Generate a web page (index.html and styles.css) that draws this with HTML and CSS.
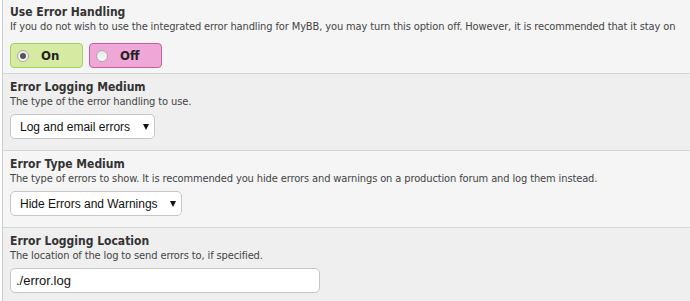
FILE: index.html
```html
<!DOCTYPE html>
<html lang="en">
<head>
  <meta charset="UTF-8" />
  <title>Error Handling Settings</title>
  <link rel="stylesheet" href="styles.css">
</head>
<body>
  <div class="settings">
    <!-- Use Error Handling -->
    <div class="setting first">
      <div class="title">Use Error Handling</div>
      <div class="desc">If you do not wish to use the integrated error handling for MyBB, you may turn this option off. However, it is recommended that it stay on</div>
      <div class="yesno">
        <label class="choice on"><span class="radio checked"></span>On</label>
        <label class="choice off"><span class="radio"></span>Off</label>
      </div>
    </div>

    <!-- Error Logging Medium -->
    <div class="setting alt">
      <div class="title">Error Logging Medium</div>
      <div class="desc">The type of the error handling to use.</div>
      <div class="select-wrap">
        <select class="select">
          <option>Log and email errors</option>
        </select>
      </div>
    </div>

    <!-- Error Type Medium -->
    <div class="setting">
      <div class="title">Error Type Medium</div>
      <div class="desc">The type of errors to show. It is recommended you hide errors and warnings on a production forum and log them instead.</div>
      <div class="select-wrap">
        <select class="select">
          <option>Hide Errors and Warnings</option>
        </select>
      </div>
    </div>

    <!-- Error Logging Location -->
    <div class="setting alt">
      <div class="title">Error Logging Location</div>
      <div class="desc">The location of the log to send errors to, if specified.</div>
      <input class="text-input" type="text" value="./error.log" />
    </div>
  </div>
</body>
</html>
```

FILE: styles.css
```css
* { box-sizing: border-box; }
body {
  margin: 0;
  background: #fff;
  font-family: "DejaVu Sans Condensed", "DejaVu Sans", sans-serif;
  color: #333;
}
.settings {
  margin-left: 2px;
  border-left: 1px solid #ccc;
}
.setting {
  background: #f5f5f5;
  border-bottom: 1px solid #d4d4d4;
  padding: 5px 7px 11px;
}
.setting.alt {
  background: #efefef;
}
.setting.first {
  padding-top: 4px;
  padding-bottom: 5px;
}
.title {
  font-size: 12px;
  font-weight: bold;
  line-height: 16px;
  color: #333;
}
.desc {
  font-size: 11px;
  line-height: 14px;
  letter-spacing: -0.12px;
  color: #444;
  white-space: nowrap;
}

.yesno {
  display: flex;
  gap: 6px;
  margin-top: 9px;
}
.choice {
  display: flex;
  align-items: center;
  gap: 12px;
  width: 73px;
  height: 25px;
  padding-left: 6px;
  border: 1px solid;
  border-radius: 4px;
  font-size: 13px;
  font-weight: bold;
  color: #222;
}
.choice.on {
  background: #d6eba1;
  border-color: #a3d05f;
}
.choice.off {
  background: #efa7d8;
  border-color: #c8609f;
}
.radio {
  width: 12px;
  height: 12px;
  border-radius: 50%;
  border: 1px solid #a9a9a9;
  background: linear-gradient(#e8e8e8, #fafafa);
  display: flex;
  align-items: center;
  justify-content: center;
}
.radio.checked::after {
  content: "";
  width: 6px;
  height: 6px;
  border-radius: 50%;
  background: #555;
}

.select-wrap {
  position: relative;
  display: inline-block;
  margin-top: 5px;
}
.select {
  appearance: none;
  -webkit-appearance: none;
  display: block;
  height: 25px;
  padding: 0 23px 0 9px;
  border: 1px solid #c6c6c6;
  border-radius: 5px;
  background: #fff;
  font-family: "Liberation Sans", sans-serif;
  font-size: 12px;
  color: #111;
}
.select-wrap::after {
  content: "";
  position: absolute;
  right: 6px;
  top: 10px;
  border-left: 3px solid transparent;
  border-right: 3px solid transparent;
  border-top: 6px solid #111;
  pointer-events: none;
}
.text-input {
  display: block;
  margin-top: 5px;
  width: 310px;
  height: 25px;
  padding: 0 5px;
  border: 1px solid #c6c6c6;
  border-radius: 5px;
  background: #fff;
  font-family: "Liberation Sans", sans-serif;
  font-size: 13px;
  color: #111;
}
```
